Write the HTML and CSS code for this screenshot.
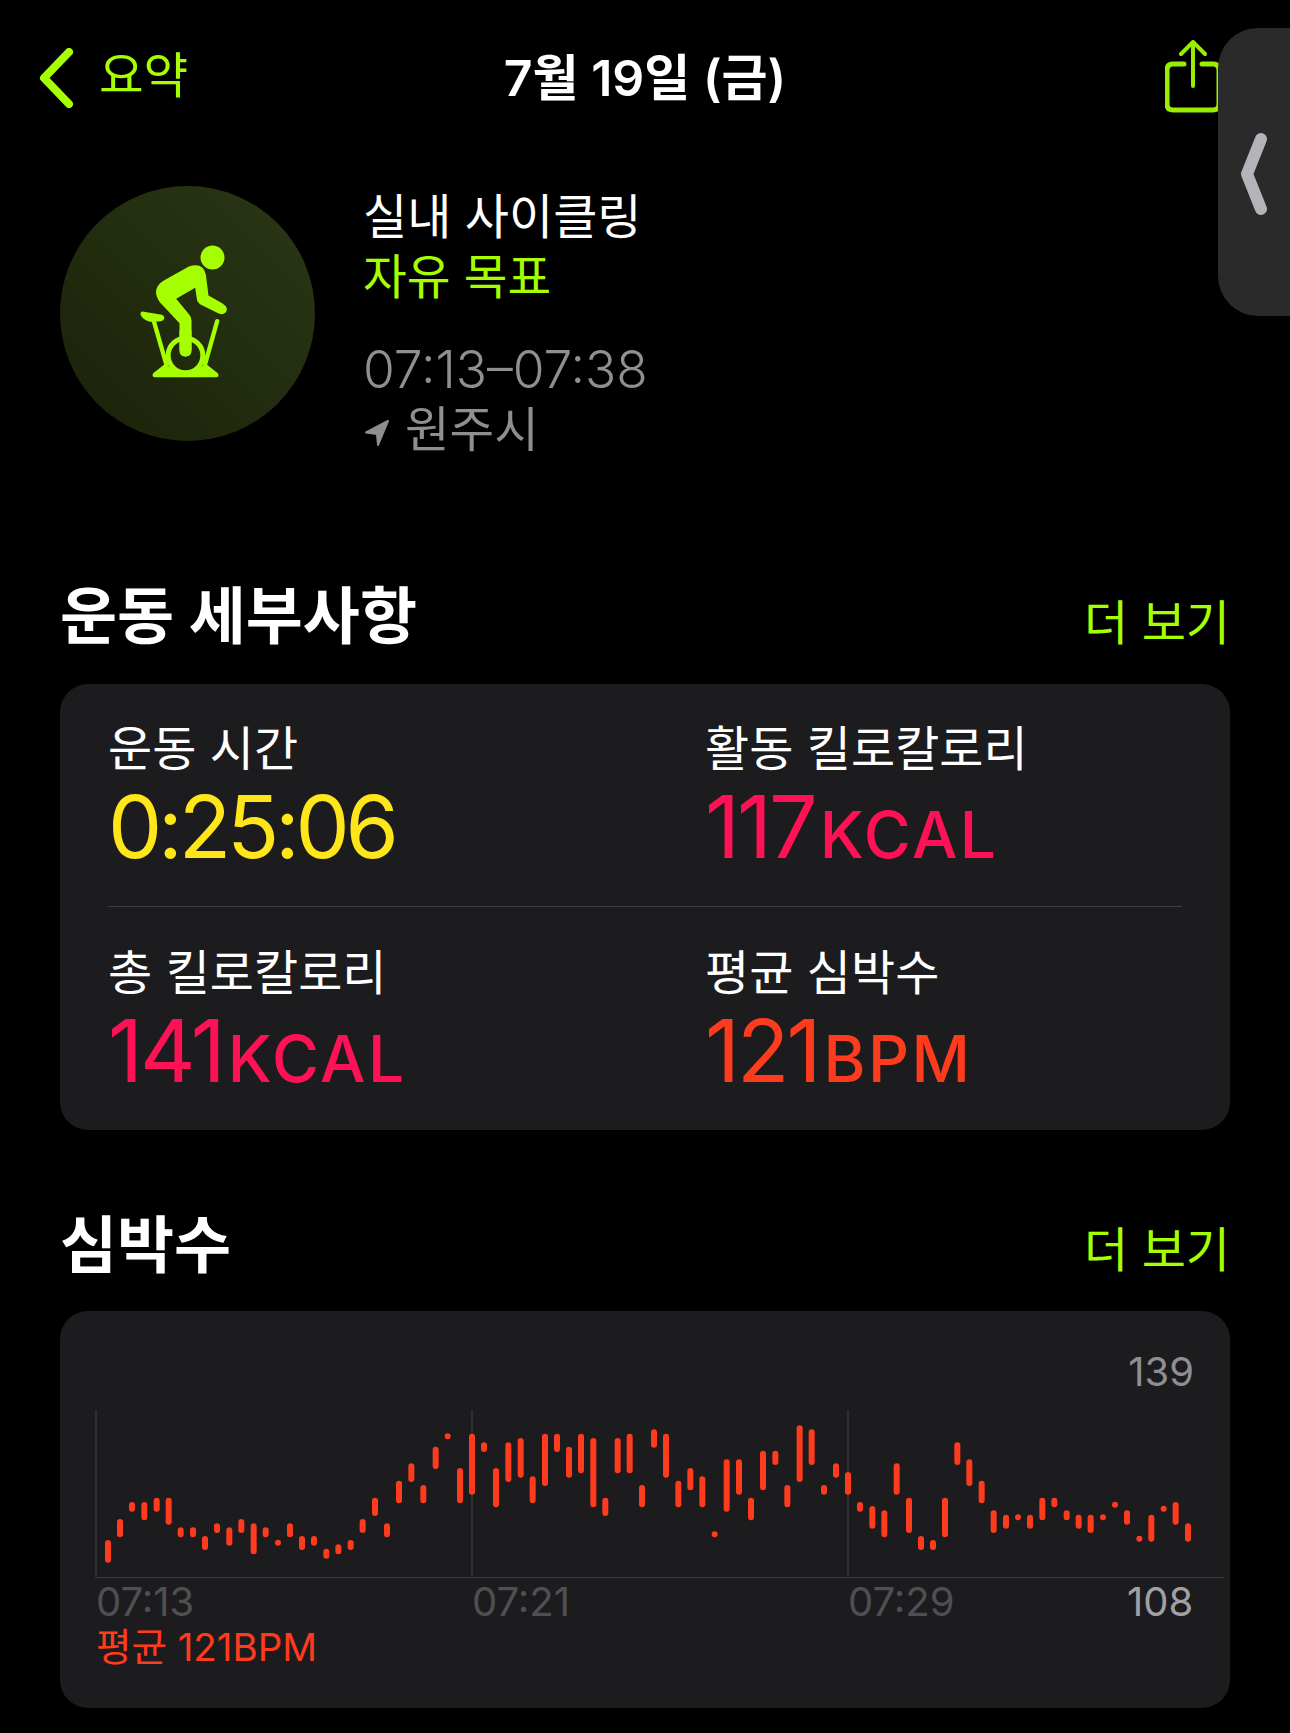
FILE: index.html
```html
<!DOCTYPE html>
<html lang="ko">
<head>
<meta charset="utf-8">
<title>실내 사이클링</title>
<link rel="stylesheet" href="styles.css">
</head>
<body>
<div class="page">
  <header class="nav">
    <div class="nav-back">
      <svg class="back-icon" viewBox="0 0 36 60"><path d="M30 4 L5 30 L30 56"/></svg>
      <span class="back-label">요약</span>
    </div>
    <h1 class="nav-title">7월 19일 (금)</h1>
    <svg class="share-icon" viewBox="0 0 56 74">
      <path d="M19 24 H8 Q2 24 2 30 V64 Q2 70 8 70 H48 Q54 70 54 64 V30 Q54 24 48 24 H37"/>
      <path class="share-thin" d="M28 46 V2 M16 14 L28 2 L40 14"/>
    </svg>
  </header>

  <section class="workout">
    <div class="badge">
      <svg class="bike" viewBox="22.5 10.5 360 480">
        <circle class="bike-fill" cx="276" cy="81" r="36"/>
        <path class="bike-fill" d="M130 150 L205 108 Q248 95 256 132 L264 195 L305 218 Q326 232 316 245 Q306 256 290 247 L240 222 Q230 216 229 205 L224 172 L167 205 L206 252 Q213 260 213 270 L213 358 Q213 378 195 378 Q177 378 177 358 L177 278 L118 215 Q90 175 130 150 Z"/>
        <path class="bike-fill" d="M66 243 L124 253 Q133 257 131 265 Q127 274 112 273 L88 274 Q66 268 60 252 Q60 243 66 243 Z"/>
        <path class="bike-line" d="M100 272 L137 400"/>
        <path class="bike-line" d="M290 272 L254 400"/>
        <circle class="bike-wheel" cx="195" cy="375" r="52"/>
        <path class="bike-fill" d="M177 300 H213 V358 Q213 378 195 378 Q177 378 177 358 Z"/>
        <path class="bike-fill" d="M98 428 L135 399 L165 424 H225 L255 399 L292 428 Q298 440 286 440 L104 440 Q92 440 98 428 Z"/>
      </svg>
    </div>
    <div class="workout-info">
      <div class="workout-name">실내 사이클링</div>
      <div class="workout-goal">자유 목표</div>
      <div class="workout-time">07:13–07:38</div>
      <div class="workout-place">
        <svg class="loc-icon" viewBox="0 0 23 25"><path d="M22 1 L12.5 24 L11.5 13.5 L1 12 Z"/></svg>
        <span>원주시</span>
      </div>
    </div>
  </section>

  <div class="section-head head-details">
    <h2 class="section-title">운동 세부사항</h2>
    <span class="more">더 보기</span>
  </div>
  <section class="card stats">
    <div class="stat-row">
      <div class="stat">
        <div class="stat-label">운동 시간</div>
        <div class="stat-value stat-time yellow">0:25:06</div>
      </div>
      <div class="stat">
        <div class="stat-label">활동 킬로칼로리</div>
        <div class="stat-value pink">117<span class="unit">KCAL</span></div>
      </div>
    </div>
    <div class="stat-row stat-row-last">
      <div class="stat">
        <div class="stat-label">총 킬로칼로리</div>
        <div class="stat-value pink">141<span class="unit">KCAL</span></div>
      </div>
      <div class="stat">
        <div class="stat-label">평균 심박수</div>
        <div class="stat-value red">121<span class="unit">BPM</span></div>
      </div>
    </div>
  </section>

  <div class="section-head head-heart">
    <h2 class="section-title">심박수</h2>
    <span class="more">더 보기</span>
  </div>
  <section class="card heart">
    <div class="chart-max">139</div>
    <svg class="chart" viewBox="15 210 3390 507">
      <path class="chart-grid" d="M18 210 V713 M1146 210 V713 M2274 210 V713 M18 713 H3402"/>
      <path class="chart-bars" d="M54 609V659M90 546V583M126 495V506M163 495V532M200 482V506M236 482V545M272 571V583M309 571V583M345 597V621M381 559V570M418 571V608M454 546V570M491 559V634M527 571V583M564 608V608M600 559V583M636 597V621M672 597V608M709 635V647M745 622V634M782 609V621M818 546V570M855 482V519M891 559V583M927 431V481M964 379V417M1000 444V481M1037 329V378M1073 289V289M1110 393V481M1146 290V455M1182 316V327M1218 393V493M1255 316V417M1292 303V404M1328 418V481M1365 290V429M1401 290V327M1437 329V404M1473 290V391M1510 303V493M1546 482V519M1583 303V391M1619 290V391M1656 444V493M1692 277V314M1728 290V404M1765 431V493M1801 393V442M1837 418V493M1874 583V583M1910 367V506M1947 367V455M1983 482V532M2019 341V442M2056 341V366M2092 444V493M2129 265V417M2165 277V366M2202 444V455M2238 379V404M2274 405V455M2310 495V506M2347 507V557M2383 520V583M2420 379V455M2457 482V570M2493 597V621M2529 609V621M2565 482V583M2602 316V366M2638 367V429M2675 431V481M2711 520V570M2748 533V557M2784 532V532M2820 533V557M2857 482V532M2893 482V493M2930 520V532M2966 533V557M3002 533V570M3039 532V532M3075 494V494M3111 520V545M3148 596V596M3184 533V596M3221 506V506M3257 495V545M3294 559V596"/>
    </svg>
    <div class="axis">
      <span class="axis-time">07:13</span>
      <span class="axis-time">07:21</span>
      <span class="axis-time">07:29</span>
      <span class="axis-min">108</span>
    </div>
    <div class="avg">평균 121BPM</div>
  </section>

  <aside class="side-tab">
    <svg class="side-chevron" viewBox="0 0 28 84"><path d="M21 7 L7 42 L21 77"/></svg>
  </aside>
</div>
</body>
</html>
```
FILE: styles.css
```css
* { box-sizing: border-box; margin: 0; padding: 0; }
html, body { background: #000; }
body { font-family: Inter, "Noto Sans CJK KR", "Noto Sans", sans-serif; color: #fff; }
.page { position: relative; width: 1290px; height: 1733px; overflow: hidden; background: #000; }

.nav { position: relative; display: flex; align-items: center; justify-content: space-between; height: 112px; padding: 44px 69px 0 39px; }
.nav-back { display: flex; align-items: center; gap: 24px; }
.back-icon { width: 36px; height: 60px; fill: none; stroke: #a6ff00; stroke-width: 8; stroke-linecap: round; stroke-linejoin: round; }
.back-label { font-size: 48.5px; line-height: 56px; color: #a6ff00; margin-top: -4px; }
.nav-title { position: absolute; left: 0; right: 0; top: 48px; text-align: center; font-size: 50px; line-height: 60px; font-weight: 600; }
.share-icon { width: 56px; height: 74px; margin-top: -2px; fill: none; stroke: #99ee00; stroke-width: 5; stroke-linecap: round; stroke-linejoin: round; }
.share-thin { stroke-width: 4; }

.workout { display: flex; margin: 74px 0 0 60px; gap: 48px; }
.badge { width: 255px; height: 255px; border-radius: 50%; background: linear-gradient(45deg, #1a2208, #2b3716); display: flex; align-items: center; justify-content: center; flex: none; }
.bike { width: 120px; height: 160px; }
.bike-fill { fill: #a6ff00; }
.bike-line { fill: none; stroke: #a6ff00; stroke-width: 13; stroke-linecap: round; }
.bike-wheel { fill: none; stroke: #a6ff00; stroke-width: 15; }
.workout-name { font-size: 48px; line-height: 62px; }
.workout-goal { font-size: 47.5px; line-height: 57px; color: #a6ff00; }
.workout-time { font-size: 51.5px; line-height: 59px; color: #8e8e93; margin-top: 35px; font-weight: 300; }
.workout-place { display: flex; align-items: center; gap: 16px; font-size: 48.5px; line-height: 62px; color: #8e8e93; }
.loc-icon { width: 24px; height: 26px; fill: #8e8e93; stroke: #8e8e93; stroke-width: 2; stroke-linejoin: round; margin: 5px 0 0 2px; }

.section-head { display: flex; justify-content: space-between; align-items: center; height: 80px; padding: 0 60px; }
.head-details { margin-top: 116px; }
.head-heart { margin-top: 76px; }
.section-title { font-size: 62px; line-height: 80px; font-weight: 700; }
.more { font-size: 48px; line-height: 60px; color: #a6ff00; margin-top: 7px; }
.head-details .more { margin-top: 11px; }

.card { margin: 0 60px; background: #1c1c1e; border-radius: 28px; }
.stats { margin-top: 27px; height: 446px; padding: 0 48px; }
.stat-row { display: flex; height: 223px; border-bottom: 1px solid #3f3f43; padding-top: 35px; }
.stat-row-last { border-bottom: 0; padding-top: 36px; }
.stat { flex: none; width: 597px; }
.stat-label { font-size: 48px; line-height: 60px; }
.stat-value { font-size: 86px; line-height: 100px; font-weight: 400; letter-spacing: -3px; margin-top: -2px; }
.stat-time { letter-spacing: -4.2px; }
.unit { font-size: 64px; font-weight: 500; letter-spacing: 2.5px; margin-left: 5px; }
.yellow { color: #ffe61a; }
.pink { color: #ff1255; }
.red { color: #ff3b1d; }

.heart { margin-top: 25px; height: 397px; padding: 38px 5px 0 35px; }
.chart-max { text-align: right; padding-right: 31px; font-size: 40px; line-height: 46px; color: #8e8e93; height: 61px; }
.chart { display: block; width: 1130px; height: 169px; }
.chart-grid { fill: none; stroke: #414143; stroke-width: 3; }
.chart-bars { fill: none; stroke: #ff3b1d; stroke-width: 18; stroke-linecap: round; }
.axis { display: flex; padding-left: 1px; font-size: 40px; line-height: 46px; }
.axis-time { flex: none; width: 376px; color: #4f4f52; }
.axis-min { flex: none; color: #a0a0a5; margin-left: -97px; }
.avg { padding-left: 1px; font-size: 38.5px; line-height: 46px; color: #ff3b1d; margin-top: -1px; }

.side-tab { position: absolute; right: 0; top: 28px; width: 72px; height: 288px; background: #2a2a2a; border-radius: 40px 0 0 40px; display: flex; padding: 104px 0 0 22px; }
.side-chevron { width: 28px; height: 84px; fill: none; stroke: #b5b3ba; stroke-width: 12; stroke-linecap: round; stroke-linejoin: round; }
```
